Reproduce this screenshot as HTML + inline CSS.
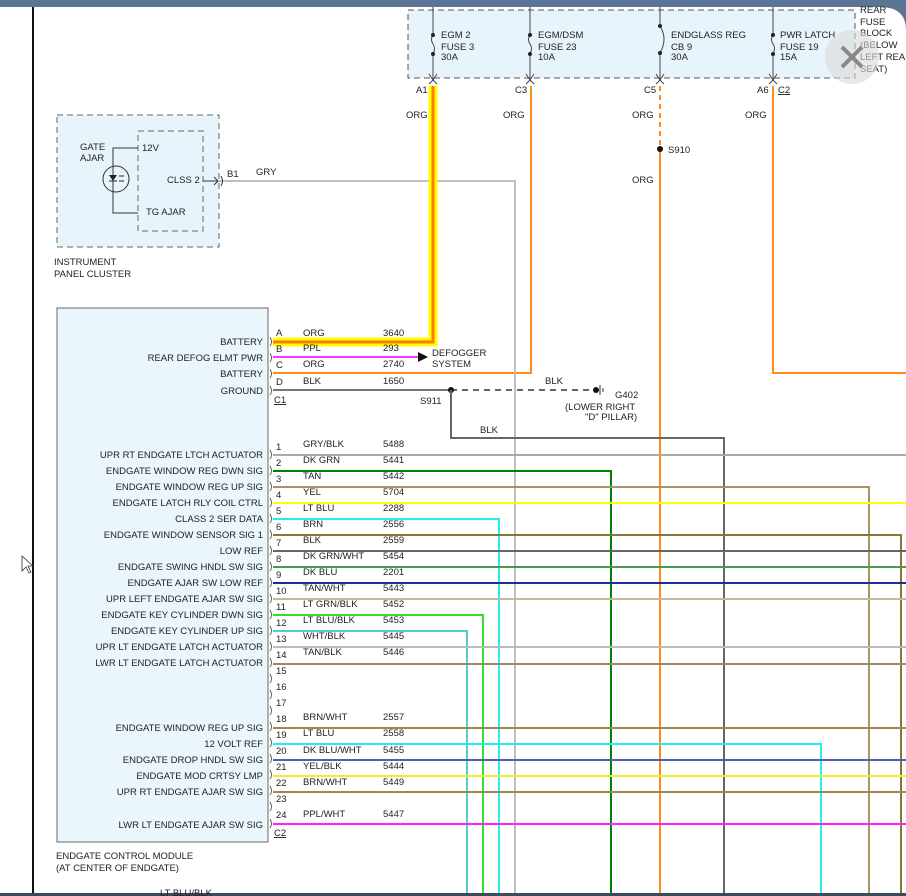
<!DOCTYPE html>
<html><head><meta charset="utf-8"><style>
html,body{margin:0;padding:0;background:#fff;}
svg{display:block;}
text{font-family:"Liberation Sans",Arial,sans-serif;font-size:9.5px;fill:#222;}
</style></head><body>
<svg width="906" height="896" viewBox="0 0 906 896" xmlns="http://www.w3.org/2000/svg">
<rect x="0" y="0" width="906" height="896" fill="#fff"/>
<rect x="0" y="0" width="906" height="7" fill="#5d7594"/>
<path d="M880 7 Q906 7 906 30 L906 7 Z" fill="#5d7594"/>
<rect x="0" y="893" width="906" height="3" fill="#3e4a5a"/>
<line x1="33" y1="7" x2="33" y2="893" stroke="#111" stroke-width="2"/>

<!-- Fuse block -->
<rect x="408" y="10" width="447" height="68" fill="#e8f4fc" stroke="#555" stroke-dasharray="6,4"/>
<g stroke="#444" stroke-width="1" fill="none">
<line x1="433" y1="7" x2="433" y2="34"/><path d="M433 34 q-3 6 0 10 q3 4 0 10"/><line x1="433" y1="54" x2="433" y2="80"/>
<line x1="530" y1="7" x2="530" y2="34"/><path d="M530 34 q-3 6 0 10 q3 4 0 10"/><line x1="530" y1="54" x2="530" y2="80"/>
<line x1="660" y1="7" x2="660" y2="26"/><path d="M660 26 q8 13 0 27"/><line x1="660" y1="53" x2="660" y2="80"/>
<line x1="773" y1="7" x2="773" y2="34"/><path d="M773 34 q-3 6 0 10 q3 4 0 10"/><line x1="773" y1="54" x2="773" y2="80"/>
<path d="M429 74 l4 6 l4 -6 M526 74 l4 6 l4 -6 M656 74 l4 6 l4 -6 M769 74 l4 6 l4 -6"/>
<path d="M429 84 l4 -4 l4 4 M526 84 l4 -4 l4 4 M656 84 l4 -4 l4 4 M769 84 l4 -4 l4 4"/>
</g>
<g fill="#222"><circle cx="433" cy="35" r="2"/><circle cx="433" cy="54" r="2"/><circle cx="530" cy="35" r="2"/><circle cx="530" cy="54" r="2"/><circle cx="660" cy="26" r="2"/><circle cx="660" cy="53" r="2"/><circle cx="773" cy="35" r="2"/><circle cx="773" cy="54" r="2"/></g>
<text x="441" y="38">EGM 2</text><text x="441" y="50">FUSE 3</text><text x="441" y="60">30A</text>
<text x="538" y="38">EGM/DSM</text><text x="538" y="50">FUSE 23</text><text x="538" y="60">10A</text>
<text x="671" y="38">ENDGLASS REG</text><text x="671" y="50">CB 9</text><text x="671" y="60">30A</text>
<text x="780" y="38">PWR LATCH</text><text x="780" y="50">FUSE 19</text><text x="780" y="60">15A</text>
<text x="860" y="13">REAR</text><text x="860" y="25">FUSE</text><text x="860" y="36">BLOCK</text><text x="860" y="48">(BELOW</text><text x="860" y="60">LEFT REAR</text><text x="860" y="72">SEAT)</text>
<text x="416" y="93">A1</text><text x="515" y="93">C3</text><text x="644" y="93">C5</text><text x="757" y="93">A6</text><text x="778" y="93" text-decoration="underline">C2</text>
<text x="406" y="118">ORG</text><text x="503" y="118">ORG</text><text x="632" y="118">ORG</text><text x="745" y="118">ORG</text>
<text x="632" y="183">ORG</text><text x="668" y="153">S910</text>

<!-- verticals -->
<g fill="none" stroke-width="2">
<line x1="660" y1="86" x2="660" y2="146" stroke="#ff8c1a" stroke-dasharray="5,4"/>
<line x1="660" y1="150" x2="660" y2="893" stroke="#ff8c1a"/>
<polyline points="531,86 531,373 273,373" stroke="#ff8c1a"/>
<polyline points="773,86 773,373 906,373" stroke="#ff8c1a"/>
<polyline points="215,181 515,181 515,893" stroke="#c0c0c0"/>
</g>
<polyline points="433,86 433,342 273,342" fill="none" stroke="#ffff00" stroke-width="9"/>
<polyline points="433,86 433,342 273,342" fill="none" stroke="#ff7a00" stroke-width="3"/>
<circle cx="660" cy="149" r="3" fill="#111"/>

<!-- instrument cluster -->
<rect x="57" y="115" width="162" height="132" fill="#e8f4fc" stroke="#666" stroke-dasharray="6,4"/>
<rect x="138" y="131" width="65" height="100" fill="none" stroke="#666" stroke-dasharray="6,4"/>
<g stroke="#333" fill="none"><polyline points="138,148 113,148 113,213 138,213"/><circle cx="116" cy="179" r="13"/><line x1="203" y1="181" x2="218" y2="181"/><path d="M214 177 l4 4 l-4 4"/><path d="M221 176 q3 5 0 10"/></g>
<path d="M109 175 h8 l-4 6 z" fill="#222"/><line x1="109" y1="181" x2="117" y2="181" stroke="#222"/>
<path d="M119 176 h5 M119 181 h5" stroke="#222"/>
<text x="80" y="150">GATE</text><text x="80" y="161">AJAR</text><text x="142" y="151">12V</text><text x="167" y="183">CLSS 2</text><text x="146" y="215">TG AJAR</text>
<text x="227" y="177">B1</text><text x="256" y="175">GRY</text>
<text x="54" y="265">INSTRUMENT</text><text x="54" y="277">PANEL CLUSTER</text>

<!-- module -->
<rect x="57" y="308" width="211" height="534" fill="#eaf5fc" stroke="#666"/>
<g font-size="9.5" text-anchor="end">
<text x="263" y="345">BATTERY</text><text x="263" y="361">REAR DEFOG ELMT PWR</text><text x="263" y="377">BATTERY</text><text x="263" y="394">GROUND</text>
<text x="263" y="458">UPR RT ENDGATE LTCH ACTUATOR</text><text x="263" y="474">ENDGATE WINDOW REG DWN SIG</text><text x="263" y="490">ENDGATE WINDOW REG UP SIG</text><text x="263" y="506">ENDGATE LATCH RLY COIL CTRL</text><text x="263" y="522">CLASS 2 SER DATA</text><text x="263" y="538">ENDGATE WINDOW SENSOR SIG 1</text><text x="263" y="554">LOW REF</text><text x="263" y="570">ENDGATE SWING HNDL SW SIG</text><text x="263" y="586">ENDGATE AJAR SW LOW REF</text><text x="263" y="602">UPR LEFT ENDGATE AJAR SW SIG</text><text x="263" y="618">ENDGATE KEY CYLINDER DWN SIG</text><text x="263" y="634">ENDGATE KEY CYLINDER UP SIG</text><text x="263" y="650">UPR LT ENDGATE LATCH ACTUATOR</text><text x="263" y="666">LWR LT ENDGATE LATCH ACTUATOR</text>
<text x="263" y="731">ENDGATE WINDOW REG UP SIG</text><text x="263" y="747">12 VOLT REF</text><text x="263" y="763">ENDGATE DROP HNDL SW SIG</text><text x="263" y="779">ENDGATE MOD CRTSY LMP</text><text x="263" y="795">UPR RT ENDGATE AJAR SW SIG</text><text x="263" y="828">LWR LT ENDGATE AJAR SW SIG</text>
</g>
<text x="56" y="859">ENDGATE CONTROL MODULE</text><text x="56" y="871">(AT CENTER OF ENDGATE)</text>
<text x="160" y="896">LT BLU/BLK</text>

<!-- top connector wires -->
<line x1="273" y1="357" x2="420" y2="357" stroke="#ff33ff" stroke-width="2"/>
<path d="M418 352 l10 5 l-10 5 z" fill="#111"/>
<text x="432" y="356">DEFOGGER</text><text x="432" y="367">SYSTEM</text>
<line x1="273" y1="390" x2="451" y2="390" stroke="#777" stroke-width="2"/>
<line x1="451" y1="390" x2="596" y2="390" stroke="#666" stroke-width="2" stroke-dasharray="6,5"/>
<circle cx="451" cy="390" r="3" fill="#111"/><circle cx="596" cy="390" r="3" fill="#111"/>
<line x1="600" y1="385" x2="600" y2="395" stroke="#333"/><line x1="603" y1="388" x2="603" y2="392" stroke="#333"/>
<polyline points="451,390 451,438 724,438 724,893" fill="none" stroke="#666" stroke-width="2"/>
<text x="545" y="384">BLK</text><text x="615" y="398">G402</text><text x="565" y="410">(LOWER RIGHT</text><text x="585" y="420">"D" PILLAR)</text><text x="420" y="404">S911</text><text x="480" y="433">BLK</text>
<g font-size="9.5"><text x="276" y="336">A</text><text x="276" y="352">B</text><text x="276" y="368">C</text><text x="276" y="385">D</text><text x="274" y="403" text-decoration="underline">C1</text>
<text x="303" y="336">ORG</text><text x="383" y="336">3640</text><text x="303" y="351">PPL</text><text x="383" y="351">293</text><text x="303" y="367">ORG</text><text x="383" y="367">2740</text><text x="303" y="384">BLK</text><text x="383" y="384">1650</text></g>

<!-- C2 wires -->
<g fill="none" stroke-width="2">
<line x1="273" y1="455" x2="906" y2="455" stroke="#aaa"/>
<polyline points="273,471 611,471 611,893" stroke="#008000"/>
<polyline points="273,487 869,487 869,893" stroke="#a89460"/>
<line x1="273" y1="503" x2="906" y2="503" stroke="#ffff00"/>
<polyline points="273,519 499,519 499,893" stroke="#22eeee"/>
<polyline points="273,535 901,535 901,893" stroke="#8b7536"/>
<line x1="273" y1="551" x2="906" y2="551" stroke="#666"/>
<line x1="273" y1="567" x2="906" y2="567" stroke="#4a9a4a"/>
<line x1="273" y1="583" x2="906" y2="583" stroke="#1a2f8f"/>
<line x1="273" y1="599" x2="906" y2="599" stroke="#c8b89a"/>
<polyline points="273,615 483,615 483,893" stroke="#33dd33"/>
<polyline points="273,631 467,631 467,893" stroke="#55cccc"/>
<line x1="273" y1="647" x2="906" y2="647" stroke="#bbb"/>
<line x1="273" y1="664" x2="906" y2="664" stroke="#9b8a6a"/>
<line x1="273" y1="728" x2="906" y2="728" stroke="#a08850"/>
<polyline points="273,744 821,744 821,893" stroke="#22eeee"/>
<line x1="273" y1="760" x2="906" y2="760" stroke="#5060b0"/>
<line x1="273" y1="776" x2="906" y2="776" stroke="#eeee30"/>
<line x1="273" y1="792" x2="906" y2="792" stroke="#a08850"/>
<line x1="273" y1="824" x2="906" y2="824" stroke="#ff22ff"/>
</g>
<g font-size="9">
<text x="276" y="450">1</text><text x="276" y="466">2</text><text x="276" y="482">3</text><text x="276" y="498">4</text><text x="276" y="514">5</text><text x="276" y="530">6</text><text x="276" y="546">7</text><text x="276" y="562">8</text><text x="276" y="578">9</text><text x="276" y="594">10</text><text x="276" y="610">11</text><text x="276" y="626">12</text><text x="276" y="642">13</text><text x="276" y="658">14</text><text x="276" y="674">15</text><text x="276" y="690">16</text><text x="276" y="706">17</text><text x="276" y="722">18</text><text x="276" y="738">19</text><text x="276" y="754">20</text><text x="276" y="770">21</text><text x="276" y="786">22</text><text x="276" y="802">23</text><text x="276" y="818">24</text><text x="274" y="836" text-decoration="underline">C2</text>
<text x="303" y="447">GRY/BLK</text><text x="383" y="447">5488</text>
<text x="303" y="463">DK GRN</text><text x="383" y="463">5441</text>
<text x="303" y="479">TAN</text><text x="383" y="479">5442</text>
<text x="303" y="495">YEL</text><text x="383" y="495">5704</text>
<text x="303" y="511">LT BLU</text><text x="383" y="511">2288</text>
<text x="303" y="527">BRN</text><text x="383" y="527">2556</text>
<text x="303" y="543">BLK</text><text x="383" y="543">2559</text>
<text x="303" y="559">DK GRN/WHT</text><text x="383" y="559">5454</text>
<text x="303" y="575">DK BLU</text><text x="383" y="575">2201</text>
<text x="303" y="591">TAN/WHT</text><text x="383" y="591">5443</text>
<text x="303" y="607">LT GRN/BLK</text><text x="383" y="607">5452</text>
<text x="303" y="623">LT BLU/BLK</text><text x="383" y="623">5453</text>
<text x="303" y="639">WHT/BLK</text><text x="383" y="639">5445</text>
<text x="303" y="655">TAN/BLK</text><text x="383" y="655">5446</text>
<text x="303" y="720">BRN/WHT</text><text x="383" y="720">2557</text>
<text x="303" y="736">LT BLU</text><text x="383" y="736">2558</text>
<text x="303" y="753">DK BLU/WHT</text><text x="383" y="753">5455</text>
<text x="303" y="769">YEL/BLK</text><text x="383" y="769">5444</text>
<text x="303" y="785">BRN/WHT</text><text x="383" y="785">5449</text>
<text x="303" y="817">PPL/WHT</text><text x="383" y="817">5447</text>
</g>
<!-- connector brackets -->
<g fill="none" stroke="#444" stroke-width="0.8">
<path d="M270 337 q3 5 0 9 M270 353 q3 5 0 9 M270 369 q3 5 0 9 M270 386 q3 5 0 9"/>
<path d="M270 450 q3 5 0 9 M270 466 q3 5 0 9 M270 482 q3 5 0 9 M270 498 q3 5 0 9 M270 514 q3 5 0 9 M270 530 q3 5 0 9 M270 546 q3 5 0 9 M270 562 q3 5 0 9 M270 578 q3 5 0 9 M270 594 q3 5 0 9 M270 610 q3 5 0 9 M270 626 q3 5 0 9 M270 642 q3 5 0 9 M270 658 q3 5 0 9 M270 674 q3 5 0 9 M270 690 q3 5 0 9 M270 706 q3 5 0 9 M270 722 q3 5 0 9 M270 738 q3 5 0 9 M270 754 q3 5 0 9 M270 770 q3 5 0 9 M270 786 q3 5 0 9 M270 802 q3 5 0 9 M270 819 q3 5 0 9"/>
</g>
<!-- cursor -->
<path d="M22 556 v15 l4 -4 l3 6 l2 -1 l-3 -6 h5 z" fill="#fff" stroke="#333" stroke-width="0.8"/>
<!-- close button -->
<circle cx="852" cy="57" r="27" fill="#d8d8d8" fill-opacity="0.6"/>
<path d="M842 47 l20 20 M862 47 l-20 20" stroke="#888" stroke-width="4"/>
</svg>
</body></html>
